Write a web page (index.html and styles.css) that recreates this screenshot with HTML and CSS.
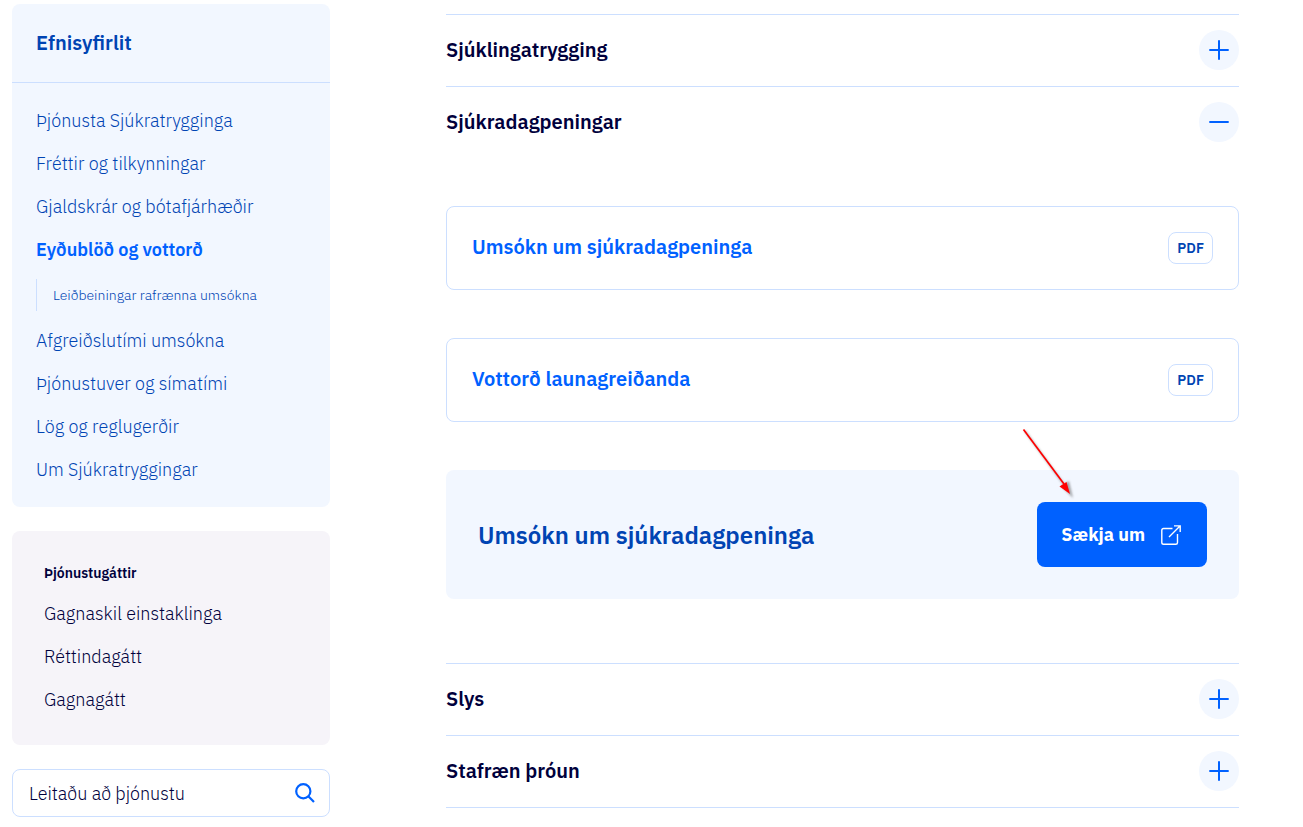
FILE: index.html
```html
<!DOCTYPE html>
<html lang="is">
<head>
<meta charset="utf-8">
<meta name="viewport" content="width=device-width, initial-scale=1">
<title>Eyðublöð og vottorð</title>
<link rel="stylesheet" href="styles.css">
</head>
<body>
<div class="page">
  <aside class="sidebar">
    <nav class="toc" aria-labelledby="toc-title">
      <h2 class="toc-title" id="toc-title">Efnisyfirlit</h2>
      <ul class="link-list toc-list">
        <li><a href="#">Þjónusta Sjúkratrygginga</a></li>
        <li><a href="#">Fréttir og tilkynningar</a></li>
        <li><a href="#">Gjaldskrár og bótafjárhæðir</a></li>
        <li><a href="#" class="current" aria-current="page">Eyðublöð og vottorð</a></li>
        <li class="sub-item"><a href="#">Leiðbeiningar rafrænna umsókna</a></li>
        <li><a href="#">Afgreiðslutími umsókna</a></li>
        <li><a href="#">Þjónustuver og símatími</a></li>
        <li><a href="#">Lög og reglugerðir</a></li>
        <li><a href="#">Um Sjúkratryggingar</a></li>
      </ul>
    </nav>
    <nav class="portals" aria-labelledby="portals-title">
      <h2 class="portals-title" id="portals-title">Þjónustugáttir</h2>
      <ul class="link-list">
        <li><a href="#">Gagnaskil einstaklinga</a></li>
        <li><a href="#">Réttindagátt</a></li>
        <li><a href="#">Gagnagátt</a></li>
      </ul>
    </nav>
    <form class="search" role="search">
      <input class="search-input" type="text" placeholder="Leitaðu að þjónustu" aria-label="Leitaðu að þjónustu">
      <button class="search-button" type="submit" aria-label="Leita">
        <svg width="20" height="20" viewBox="0 0 20 20" fill="none" stroke="currentColor" stroke-width="2.2" aria-hidden="true"><circle cx="8.3" cy="8.3" r="7.1"/><path d="M13.3 13.3L19 19"/></svg>
      </button>
    </form>
  </aside>

  <main class="accordion">
    <section class="item">
      <button class="item-head" type="button" aria-expanded="false">
        <span>Sjúklingatrygging</span>
        <span class="toggle"><svg width="20" height="20" viewBox="0 0 20 20" stroke="currentColor" stroke-width="2" aria-hidden="true"><path d="M0.3 10H19.7M10 0.3V19.7"/></svg></span>
      </button>
    </section>
    <section class="item">
      <button class="item-head" type="button" aria-expanded="true">
        <span>Sjúkradagpeningar</span>
        <span class="toggle"><svg width="20" height="20" viewBox="0 0 20 20" stroke="currentColor" stroke-width="2" aria-hidden="true"><path d="M0.3 10H19.7"/></svg></span>
      </button>
      <div class="item-body">
        <a class="card" href="#"><span>Umsókn um sjúkradagpeninga</span><span class="tag">PDF</span></a>
        <a class="card" href="#"><span>Vottorð launagreiðanda</span><span class="tag">PDF</span></a>
        <div class="cta">
          <h3 class="cta-title">Umsókn um sjúkradagpeninga</h3>
          <div class="cta-action">
            <a class="cta-button" href="#">
              <span>Sækja um</span>
              <svg width="20" height="20" viewBox="0 0 20 20" fill="none" stroke="currentColor" stroke-width="1.4" aria-hidden="true"><path d="M11.5 3.5H2.6Q.8 3.5 .8 5.3V17.4Q.8 19.2 2.6 19.2H14.8Q16.5 19.2 16.5 17.4V9"/><path d="M8 12L19 1M13 .9H19.2V7"/></svg>
            </a>
            <svg class="arrow" width="64" height="78" viewBox="0 0 64 78" aria-hidden="true">
              <defs><filter id="soft" x="-20%" y="-20%" width="140%" height="140%"><feGaussianBlur stdDeviation="1"/></filter></defs>
              <g filter="url(#soft)" opacity=".5"><path d="M9 7L49 62" stroke="#555" stroke-width="1.6"/><path d="M57 74L45 62L53 57Z" fill="#555"/></g>
              <path d="M7.500 5.500L48 60" stroke="#f00" stroke-width="1.7"/>
              <path d="M54 70L43.500 62.500L50.500 58Z" fill="#f00"/>
            </svg>
          </div>
        </div>
      </div>
    </section>
    <section class="item">
      <button class="item-head" type="button" aria-expanded="false">
        <span>Slys</span>
        <span class="toggle"><svg width="20" height="20" viewBox="0 0 20 20" stroke="currentColor" stroke-width="2" aria-hidden="true"><path d="M0.3 10H19.7M10 0.3V19.7"/></svg></span>
      </button>
    </section>
    <section class="item">
      <button class="item-head" type="button" aria-expanded="false">
        <span>Stafræn þróun</span>
        <span class="toggle"><svg width="20" height="20" viewBox="0 0 20 20" stroke="currentColor" stroke-width="2" aria-hidden="true"><path d="M0.3 10H19.7M10 0.3V19.7"/></svg></span>
      </button>
    </section>
  </main>
</div>
</body>
</html>
```
FILE: styles.css
```css
:root {
  --blue: #0061ff;
  --blue-dark: #0044b3;
  --blue-light: #f2f7ff;
  --line: #ccdfff;
  --navy: #00003c;
}

* { box-sizing: border-box; }

body {
  margin: 0;
  background: #fff;
  color: var(--navy);
  font-family: "IBM Plex Sans", "Noto Sans", sans-serif;
  font-size: 18px;
  font-weight: 300;
  line-height: 27px;
}

a { color: inherit; text-decoration: none; }
h2, h3 { margin: 0; }
svg { display: block; flex: none; }

button {
  border: 0;
  padding: 0;
  background: none;
  font: inherit;
  cursor: pointer;
}

.page {
  display: grid;
  grid-template-columns: minmax(0, 318fr) minmax(0, 793fr);
  column-gap: 116px;
  align-items: start;
  padding: 0 64px 0 12px;
}

.sidebar {
  display: flex;
  flex-direction: column;
  gap: 24px;
  padding-top: 4px;
}

.toc {
  background: var(--blue-light);
  border-radius: 8px;
  color: var(--blue-dark);
}

.toc-title {
  padding: 24px;
  border-bottom: 1px solid var(--line);
  font-size: 20px;
  font-weight: 600;
  line-height: 30px;
}

.link-list {
  display: flex;
  flex-direction: column;
  gap: 16px;
  margin: 0;
  padding: 0;
  list-style: none;
}

.toc-list { padding: 24px; }

.current { color: var(--blue); font-weight: 600; }

.sub-item {
  padding-left: 16px;
  border-left: 1px solid var(--line);
  font-size: 14px;
  line-height: 32px;
}

.portals {
  display: flex;
  flex-direction: column;
  gap: 16px;
  padding: 32px;
  background: #f6f4f9;
  border-radius: 8px;
}

.portals-title {
  font-size: 14px;
  font-weight: 600;
  line-height: 21px;
}

.search {
  display: flex;
  align-items: center;
  height: 48px;
  padding: 0 14px 0 16px;
  border: 1px solid var(--line);
  border-radius: 8px;
}

.search-input {
  flex: 1;
  min-width: 0;
  padding: 0;
  border: 0;
  outline: 0;
  background: none;
  color: inherit;
  font: inherit;
}

.search-input::placeholder { color: var(--navy); opacity: 1; }
.search-button { color: var(--blue); }

.accordion { padding-top: 14px; }
.item { border-top: 1px solid var(--line); }
.item:last-child { border-bottom: 1px solid var(--line); }

.item-head {
  display: flex;
  align-items: center;
  justify-content: space-between;
  width: 100%;
  padding: 15px 0 16px;
  color: var(--navy);
  font-size: 20px;
  font-weight: 600;
  line-height: 40px;
  text-align: left;
}

.toggle {
  display: grid;
  place-items: center;
  width: 40px;
  height: 40px;
  border-radius: 50%;
  background: var(--blue-light);
  color: var(--blue);
}

.item-body {
  display: flex;
  flex-direction: column;
  gap: 48px;
  padding: 48px 0 64px;
}

.card {
  display: flex;
  align-items: flex-start;
  justify-content: space-between;
  padding: 25px;
  border: 1px solid var(--line);
  border-radius: 8px;
  color: var(--blue);
  font-size: 20px;
  font-weight: 600;
  line-height: 30px;
}

.tag {
  padding: 0 8px;
  border: 1px solid var(--line);
  border-radius: 8px;
  color: var(--blue-dark);
  font-size: 14px;
}

.cta {
  display: flex;
  align-items: center;
  justify-content: space-between;
  padding: 32px;
  border-radius: 8px;
  background: var(--blue-light);
}

.cta-title {
  color: var(--blue-dark);
  font-size: 24px;
  font-weight: 600;
  line-height: 32px;
}

.cta-action { position: relative; }

.cta-button {
  display: flex;
  align-items: center;
  gap: 16px;
  padding: 19px 26px 19px 24px;
  border-radius: 8px;
  background: var(--blue);
  color: #fff;
  font-weight: 700;
}

.arrow {
  position: absolute;
  top: -78px;
  left: -21px;
}
```
